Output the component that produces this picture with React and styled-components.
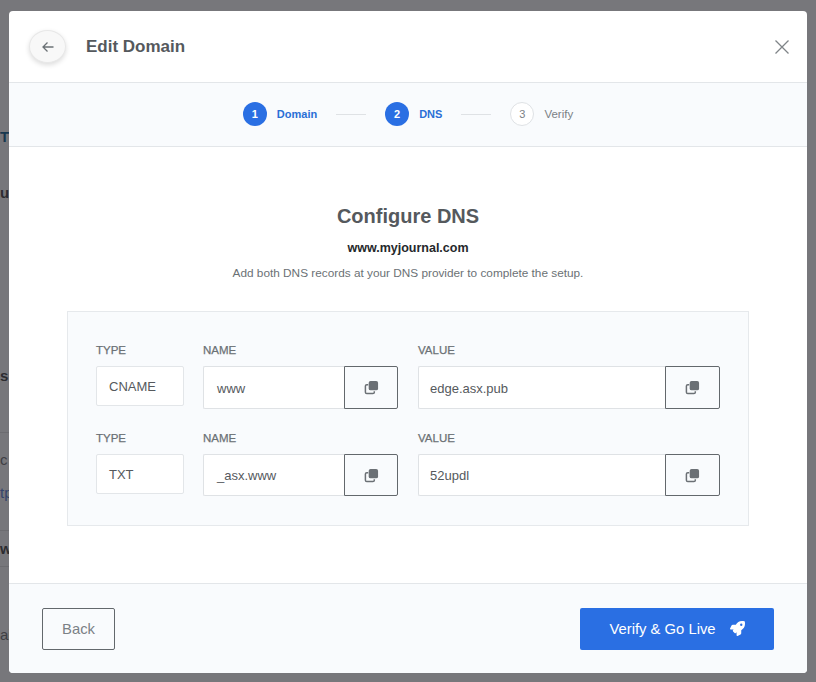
import React from "react";
import styled, { createGlobalStyle } from "styled-components";
import { FaRocket } from "react-icons/fa";

const GlobalStyle = createGlobalStyle`
  html, body {
    margin: 0;
    padding: 0;
    height: 100%;
    background: #77777b;
    font-family: "Liberation Sans", Arial, sans-serif;
  }
  * { box-sizing: border-box; }
`;

const Backdrop = styled.div`
  position: relative;
  width: 816px;
  height: 682px;
  padding: 11px 9px 9px;
  overflow: hidden;
  background: #77777b;
`;

const PageScrap = styled.span`
  position: absolute;
  left: 0;
  top: ${(p) => p.$top}px;
  font-size: 15px;
  font-weight: ${(p) => (p.$bold ? 700 : 400)};
  color: ${(p) => p.$color || "#2c2c30"};
`;

const PageRule = styled.div`
  position: absolute;
  left: 0;
  width: 9px;
  top: ${(p) => p.$top}px;
  height: 1px;
  background: #6c6c70;
`;

const Modal = styled.div`
  position: relative;
  display: flex;
  flex-direction: column;
  width: 798px;
  height: 662px;
  background: #fff;
  border-radius: 4px;
  overflow: hidden;
`;

const Header = styled.header`
  display: flex;
  align-items: center;
  height: 72px;
  padding: 0 17px 0 20px;
  border-bottom: 1px solid #e3e6e9;
`;

const RoundButton = styled.button`
  display: flex;
  align-items: center;
  justify-content: center;
  width: 37px;
  height: 33px;
  padding: 0;
  border: 1px solid #e8e8e8;
  border-radius: 50%;
  background: #f8f8f8;
  box-shadow: 0 2px 5px rgba(0, 0, 0, 0.14);
`;

const Title = styled.h1`
  flex: 1;
  margin: 0 0 0 20px;
  font-size: 17px;
  font-weight: 700;
  color: #55595d;
`;

const CloseButton = styled.button`
  display: flex;
  padding: 0;
  border: 0;
  background: none;
`;

const Stepper = styled.nav`
  display: flex;
  align-items: center;
  justify-content: center;
  gap: 19px;
  height: 64px;
  padding-bottom: 1px;
  background: #f9fbfd;
  border-bottom: 1px solid #e3e6e9;
`;

const Step = styled.div`
  display: flex;
  align-items: center;
  gap: 10px;
  font-size: ${(p) => (p.$active ? "11px" : "11.5px")};
  font-weight: ${(p) => (p.$active ? 700 : 400)};
  color: ${(p) => (p.$active ? "#2a6fd6" : "#7b8186")};
`;

const StepDot = styled.span`
  display: flex;
  align-items: center;
  justify-content: center;
  width: 24px;
  height: 24px;
  border-radius: 50%;
  font-size: 11px;
  background: ${(p) => (p.$active ? "#2a6fe3" : "#fff")};
  color: ${(p) => (p.$active ? "#fff" : "#7b8186")};
  border: ${(p) => (p.$active ? "0" : "1px solid #dfe2e5")};
`;

const StepLine = styled.span`
  width: 30px;
  height: 1px;
  background: #dfe2e5;
`;

const Body = styled.main`
  flex: 1;
  display: flex;
  flex-direction: column;
  align-items: center;
  padding-top: 57px;
`;

const Heading = styled.h2`
  margin: 0;
  font-size: 20px;
  line-height: 24px;
  font-weight: 700;
  color: #55595d;
`;

const Domain = styled.div`
  margin-top: 12px;
  font-size: 12.5px;
  line-height: 16px;
  font-weight: 700;
  color: #25282b;
`;

const Hint = styled.p`
  margin: 10px 0 0;
  font-size: 11.8px;
  line-height: 14px;
  color: #6b7175;
`;

const RecordsPanel = styled.section`
  display: flex;
  flex-direction: column;
  gap: 23px;
  width: 682px;
  height: 215px;
  margin-top: 31px;
  padding: 32px 28px;
  background: #f9fbfd;
  border: 1px solid #e6e9ec;
`;

const RecordRow = styled.div`
  display: grid;
  grid-template-columns: 88px 195px 303px;
  column-gap: 19px;

  & > :last-child {
    margin-left: 1px;
  }
`;

const Field = styled.div`
  display: flex;
  flex-direction: column;
`;

const Label = styled.label`
  height: 22px;
  font-size: 11.5px;
  line-height: 12px;
  color: #6b7175;
  -webkit-text-stroke: 0.25px #6b7175;
`;

const TypeBox = styled.div`
  display: flex;
  align-items: center;
  height: 40px;
  padding-left: 12px;
  font-size: 13px;
  color: #55595d;
  background: #fff;
  border: 1px solid #e3e6e9;
  border-radius: 2px;
`;

const InputGroup = styled.div`
  display: flex;
  height: ${(p) => p.$height}px;
`;

const ValueBox = styled.div`
  flex: 1;
  display: flex;
  align-items: center;
  padding-left: ${(p) => p.$inset}px;
  padding-top: 1px;
  font-size: 13px;
  color: #55595d;
  background: #fff;
  border: 1px solid #dfe2e5;
  border-right: 0;
  border-radius: 2px 0 0 2px;
`;

const CopyButton = styled.button`
  display: flex;
  align-items: center;
  justify-content: center;
  width: ${(p) => p.$width}px;
  padding: 0;
  background: #f9fbfd;
  border: 1px solid #63686c;
  border-radius: 0 2px 2px 0;
`;

const Footer = styled.footer`
  display: flex;
  align-items: center;
  justify-content: space-between;
  height: 90px;
  padding: 0 33px;
  background: #f9fbfd;
  border-top: 1px solid #e3e6e9;
`;

const BackButton = styled.button`
  width: 73px;
  height: 42px;
  font-family: inherit;
  font-size: 14.8px;
  color: #7b8186;
  background: transparent;
  border: 1px solid #63686c;
  border-radius: 2px;
`;

const PrimaryButton = styled.button`
  display: flex;
  align-items: center;
  justify-content: center;
  gap: 14px;
  width: 194px;
  height: 42px;
  font-family: inherit;
  font-size: 14.8px;
  color: #fff;
  background: #2a6fe3;
  border: 0;
  border-radius: 2px;
`;

function CopyIcon() {
  return (
    <svg width="15" height="15" viewBox="0 0 16 16" fill="none">
      <path d="M4.5 5H3a1.5 1.5 0 0 0-1.5 1.5V13A1.5 1.5 0 0 0 3 14.5h6.5A1.5 1.5 0 0 0 11 13v-1" stroke="#6b7075" strokeWidth="1.6" />
      <rect x="5" y="1" width="10" height="10" rx="2" fill="#6b7075" />
    </svg>
  );
}

function Record({ type, name, value, groupHeight }) {
  return (
    <RecordRow>
      <Field>
        <Label>TYPE</Label>
        <TypeBox>{type}</TypeBox>
      </Field>
      <Field>
        <Label>NAME</Label>
        <InputGroup $height={groupHeight}>
          <ValueBox $inset={13}>{name}</ValueBox>
          <CopyButton $width={54} aria-label="Copy name"><CopyIcon /></CopyButton>
        </InputGroup>
      </Field>
      <Field>
        <Label>VALUE</Label>
        <InputGroup $height={groupHeight}>
          <ValueBox $inset={11}>{value}</ValueBox>
          <CopyButton $width={55} aria-label="Copy value"><CopyIcon /></CopyButton>
        </InputGroup>
      </Field>
    </RecordRow>
  );
}

export default function App() {
  return (
    <Backdrop>
      <GlobalStyle />
      <PageScrap $top={128} $bold $color="#17384f">T</PageScrap>
      <PageScrap $top={184} $bold>u</PageScrap>
      <PageScrap $top={367} $bold>s</PageScrap>
      <PageScrap $top={451} $color="#3f3f44">c</PageScrap>
      <PageScrap $top={484} $color="#35456b">tp</PageScrap>
      <PageScrap $top={540} $bold>w</PageScrap>
      <PageScrap $top={626} $color="#3f3f44">ai</PageScrap>
      <PageRule $top={432} />
      <PageRule $top={530} />
      <PageRule $top={566} />

      <Modal>
        <Header>
          <RoundButton aria-label="Back">
            <svg width="14" height="14" viewBox="0 0 14 14" fill="none" stroke="#6b7175" strokeWidth="1.3">
              <path d="M12.5 7H2M6.5 2.5 2 7l4.5 4.5" />
            </svg>
          </RoundButton>
          <Title>Edit Domain</Title>
          <CloseButton aria-label="Close">
            <svg width="16" height="16" viewBox="0 0 16 16" fill="none" stroke="#7f8488" strokeWidth="1.3">
              <path d="M1.5 1.5l13 13M14.5 1.5l-13 13" />
            </svg>
          </CloseButton>
        </Header>

        <Stepper>
          <Step $active><StepDot $active>1</StepDot>Domain</Step>
          <StepLine />
          <Step $active><StepDot $active>2</StepDot>DNS</Step>
          <StepLine />
          <Step><StepDot>3</StepDot>Verify</Step>
        </Stepper>

        <Body>
          <Heading>Configure DNS</Heading>
          <Domain>www.myjournal.com</Domain>
          <Hint>Add both DNS records at your DNS provider to complete the setup.</Hint>
          <RecordsPanel>
            <Record type="CNAME" name="www" value="edge.asx.pub" groupHeight={43} />
            <Record type="TXT" name="_asx.www" value="52updl" groupHeight={42} />
          </RecordsPanel>
        </Body>

        <Footer>
          <BackButton>Back</BackButton>
          <PrimaryButton>Verify &amp; Go Live <FaRocket size={15} /></PrimaryButton>
        </Footer>
      </Modal>
    </Backdrop>
  );
}
